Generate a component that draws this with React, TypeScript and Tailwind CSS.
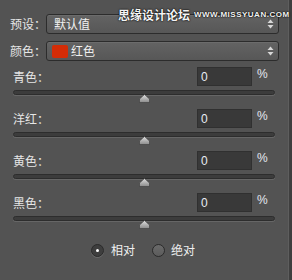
import React from "react";

const font = { fontFamily: '"Noto Sans CJK SC", "Noto Sans", sans-serif' };

function Arrows() {
  return (
    <svg width="7" height="10" viewBox="0 0 7 10" className="mr-[4px]">
      <path d="M3.5 0.5 L6.5 4 L0.5 4 Z" fill="#d8d8d8" />
      <path d="M3.5 9.5 L6.5 6 L0.5 6 Z" fill="#d8d8d8" />
    </svg>
  );
}

function Dropdown({ children }: { children: React.ReactNode }) {
  return (
    <div className="flex-1 h-[20px] flex items-center justify-between rounded-[3px] border border-[#2c2c2c] bg-gradient-to-b from-[#636363] to-[#575757] shadow-[inset_0_1px_0_#6c6c6c]">
      <div className="flex items-center">{children}</div>
      <Arrows />
    </div>
  );
}

function Thumb() {
  return (
    <svg width="11" height="9" viewBox="0 0 11 9">
      <defs>
        <linearGradient id="tg" x1="0" y1="0" x2="0" y2="1">
          <stop offset="0" stopColor="#e0e0e0" />
          <stop offset="1" stopColor="#8a8a8a" />
        </linearGradient>
      </defs>
      <path d="M5.5 0.5 L10.5 5 L10.5 8.5 L0.5 8.5 L0.5 5 Z" fill="url(#tg)" stroke="#3a3a3a" strokeWidth="0.6" />
    </svg>
  );
}

function SliderRow({ label }: { label: string }) {
  return (
    <div className="flex flex-col h-[42px]">
      <div className="flex items-center h-[19px]">
        <div className="w-[187px] pl-[3px] text-[12px] text-[#e6e6e6] leading-none">{label}：</div>
        <div className="w-[55px] h-[19px] bg-[#393939] border border-[#303030] flex items-center pl-[3px] text-[12px] text-[#e8ecf4] leading-none" style={{ fontFamily: '"Liberation Sans", sans-serif' }}>0</div>
        <div className="ml-[5px] text-[12px] text-[#e4e8f0] leading-none -mt-[5px]" style={{ fontFamily: '"Liberation Sans", sans-serif' }}>%</div>
      </div>
      <div className="relative mt-[4px] ml-[3px] w-[262px] h-[5px] rounded-[3px] bg-[#3c3c3c] border border-[#2d2d2d] shadow-[0_1px_0_#666]">
        <div className="absolute left-[125px] top-[3px]">
          <Thumb />
        </div>
      </div>
    </div>
  );
}

export default function App() {
  return (
    <div className="relative w-[292px] h-[280px] bg-[#535353] overflow-hidden flex" style={font}>
      <div className="w-[288px] flex flex-col pt-[14px] pl-[10px] pr-[9px]">
        <div className="flex items-center h-[20px]">
          <div className="w-[36px] text-[12px] text-[#e6e6e6] leading-none">预设：</div>
          <Dropdown>
            <span className="ml-[7px] text-[12px] text-[#f0f0f0] leading-none">默认值</span>
          </Dropdown>
        </div>
        <div className="flex items-center h-[20px] mt-[7px]">
          <div className="w-[36px] text-[12px] text-[#e6e6e6] leading-none">颜色：</div>
          <Dropdown>
            <span className="ml-[5px] w-[16px] h-[13px] bg-[#d42c06] rounded-[2px]" />
            <span className="ml-[3px] text-[12px] text-[#f0f0f0] leading-none">红色</span>
          </Dropdown>
        </div>
        <div className="mt-[6px] flex flex-col">
          <SliderRow label="青色" />
          <SliderRow label="洋红" />
          <SliderRow label="黄色" />
          <SliderRow label="黑色" />
        </div>
        <div className="flex items-center h-[14px] mt-[8px] pl-[81px]">
          <div className="w-[13px] h-[13px] rounded-full bg-[#3e3e3e] border border-[#2a2a2a] shadow-[0_1px_0_#6a6a6a] flex items-center justify-center">
            <div className="w-[3px] h-[3px] rounded-full bg-white" />
          </div>
          <span className="ml-[7px] text-[12px] text-[#f0f0f0] leading-none">相对</span>
          <div className="ml-[17px] w-[13px] h-[13px] rounded-full bg-gradient-to-b from-[#6a6a6a] to-[#5c5c5c] border border-[#2a2a2a]" />
          <span className="ml-[6px] text-[12px] text-[#f0f0f0] leading-none">绝对</span>
        </div>
      </div>
      <div className="w-[4px] h-full bg-[#3f3f3f] border-l border-[#5e5e5e]" />
      <div className="absolute left-[118px] top-[9px] flex items-center whitespace-nowrap">
        <span className="text-[12px] font-bold text-[#f4f4f4] leading-none [text-shadow:0_0_2px_#000,0_0_1px_#000]">思缘设计论坛</span>
        <span className="ml-[4px] text-[8px] font-bold text-[#f4f4f4] leading-none tracking-[0.5px] [text-shadow:0_0_2px_#000,0_0_1px_#000]" style={{ fontFamily: '"Liberation Sans", sans-serif' }}>WWW.MISSYUAN.COM</span>
      </div>
    </div>
  );
}
